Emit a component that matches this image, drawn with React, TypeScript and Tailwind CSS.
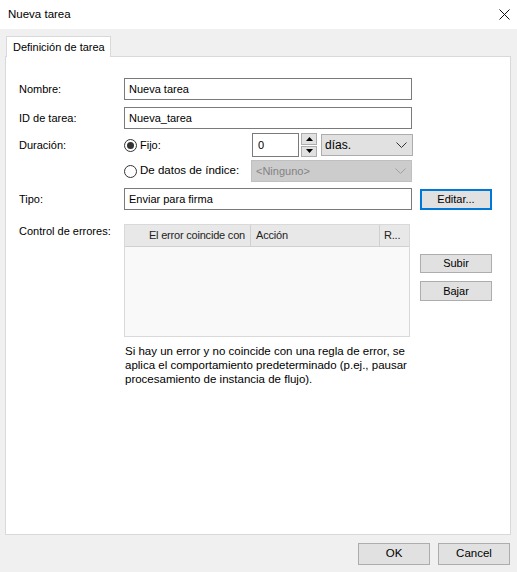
import type { JSX } from "react";

const font = "font-['Liberation_Sans','DejaVu_Sans',sans-serif]";

function Chevron({ color = "#333" }: { color?: string }): JSX.Element {
  return (
    <svg width="11" height="7" viewBox="0 0 11 7" fill="none">
      <path d="M0.5 0.5 L5.5 5.5 L10.5 0.5" stroke={color} strokeWidth="1" />
    </svg>
  );
}

function Radio({ checked }: { checked?: boolean }): JSX.Element {
  return (
    <span className="w-[13px] h-[13px] rounded-full border border-[#333] bg-white flex items-center justify-center shrink-0">
      {checked && <span className="w-[7px] h-[7px] rounded-full bg-[#333]" />}
    </span>
  );
}

function TextBox({ value, className = "" }: { value: string; className?: string }): JSX.Element {
  return (
    <div
      className={`h-[22px] border border-[#7a7a7a] bg-white flex items-center pl-[4px] text-black ${className}`}
    >
      {value}
    </div>
  );
}

function Button({
  children,
  className = "",
}: {
  children: string;
  className?: string;
}): JSX.Element {
  return (
    <div
      className={`border border-[#adadad] bg-[#e1e1e1] flex items-center justify-center text-black ${className}`}
    >
      {children}
    </div>
  );
}

export default function App(): JSX.Element {
  return (
    <div className={`w-[517px] h-[572px] bg-[#f0f0f0] flex flex-col ${font} text-[11px] text-black`}>
      {/* Title bar */}
      <div className="h-[29px] bg-white flex items-center justify-between pl-[8px] pr-[6px]">
        <span className="text-[11.5px]">Nueva tarea</span>
        <svg width="11" height="11" viewBox="0 0 11 11" className="mr-[1px]">
          <path d="M0.5 0.5 L10.5 10.5 M10.5 0.5 L0.5 10.5" stroke="#111" strokeWidth="1" />
        </svg>
      </div>

      <div className="pl-[5px] pt-[7px]">
        {/* Tab header */}
        <div className="ml-[1px] w-[105px] h-[21px] bg-white border border-b-0 border-[#d9d9d9] flex items-center pl-[6px] whitespace-nowrap relative z-10 -mb-[1px]">
          Definición de tarea
        </div>

        {/* Tab page */}
        <div className="w-[506px] h-[479px] bg-white border border-[#d9d9d9] pl-[13px] pt-[21px]">
          <div className="flex flex-col">
            {/* Nombre */}
            <div className="flex items-center h-[22px]">
              <span className="w-[105px]">Nombre:</span>
              <TextBox value="Nueva tarea" className="w-[288px]" />
            </div>

            {/* ID de tarea */}
            <div className="flex items-center h-[22px] mt-[7px]">
              <span className="w-[105px]">ID de tarea:</span>
              <TextBox value="Nueva_tarea" className="w-[288px]" />
            </div>

            {/* Duración - fijo */}
            <div className="flex items-center h-[24px] mt-[4px]">
              <span className="w-[105px]">Duración:</span>
              <div className="w-[128px] flex items-center gap-[3px]">
                <Radio checked />
                <span>Fijo:</span>
              </div>
              <div className="w-[47px] h-[24px] border border-[#7a7a7a] bg-white flex items-center pl-[5px]">
                0
              </div>
              <div className="ml-[2px] w-[16px] h-[24px] flex flex-col gap-[1px]">
                <div className="flex-1 bg-[#e1e1e1] border border-[#adadad] flex items-center justify-center">
                  <svg width="7" height="4" viewBox="0 0 7 4">
                    <path d="M3.5 0 L7 4 L0 4 Z" fill="#000" />
                  </svg>
                </div>
                <div className="flex-1 bg-[#e1e1e1] border border-[#adadad] flex items-center justify-center">
                  <svg width="7" height="4" viewBox="0 0 7 4">
                    <path d="M0 0 L7 0 L3.5 4 Z" fill="#000" />
                  </svg>
                </div>
              </div>
              <div className="ml-[4px] w-[92px] h-[22px] bg-[#e1e1e1] border border-[#adadad] flex items-center justify-between pl-[3px] pr-[5px] text-[12px]">
                <span>días.</span>
                <Chevron />
              </div>
            </div>

            {/* Duración - de datos de índice */}
            <div className="flex items-center h-[22px] mt-[3px]">
              <span className="w-[105px]" />
              <div className="w-[127px] flex items-center gap-[3px] text-[11.5px]">
                <Radio />
                <span>De datos de índice:</span>
              </div>
              <div className="w-[161px] h-[22px] bg-[#cccccc] border border-[#bfbfbf] flex items-center justify-between pl-[4px] pr-[5px] text-[#838383]">
                <span>&lt;Ninguno&gt;</span>
                <Chevron color="#a0a0a0" />
              </div>
            </div>

            {/* Tipo */}
            <div className="flex items-center h-[22px] mt-[6px]">
              <span className="w-[105px]">Tipo:</span>
              <TextBox value="Enviar para firma" className="w-[288px]" />
              <div className="ml-[8px] w-[72px] h-[21px] bg-[#e1e1e1] border-2 border-[#0078d7] flex items-center justify-center">
                Editar...
              </div>
            </div>

            {/* Control de errores */}
            <div className="flex mt-[14px]">
              <span className="w-[105px] -mt-[1px]">Control de errores:</span>
              <div className="w-[286px] h-[113px] border border-[#d9d9d9] bg-[#f9f9f9] flex flex-col">
                <div className="h-[22px] bg-[#e8e8e8] border-b border-[#d0d0d0] flex items-stretch text-[#222] text-[11px] tracking-[-0.2px]">
                  <div className="w-[126px] border-r border-[#d0d0d0] flex items-center justify-end pr-[5px]">
                    El error coincide con
                  </div>
                  <div className="w-[129px] border-r border-[#d0d0d0] flex items-center pl-[5px]">
                    Acción
                  </div>
                  <div className="flex-1 flex items-center pl-[4px]">R...</div>
                </div>
              </div>
              <div className="ml-[10px] pt-[30px] flex flex-col gap-[8px]">
                <Button className="w-[72px] h-[19px]">Subir</Button>
                <Button className="w-[72px] h-[20px]">Bajar</Button>
              </div>
            </div>

            {/* Nota */}
            <div className="ml-[106px] mt-[7px] leading-[14px] text-[11.5px] whitespace-nowrap">
              Si hay un error y no coincide con una regla de error, se
              <br />
              aplica el comportamiento predeterminado (p.ej., pausar
              <br />
              procesamiento de instancia de flujo).
            </div>
          </div>
        </div>

        {/* Footer buttons */}
        <div className="flex justify-end gap-[8px] pr-[7px] mt-[8px]">
          <Button className="w-[72px] h-[22px] text-[11.5px]">OK</Button>
          <Button className="w-[72px] h-[22px] text-[11.5px]">Cancel</Button>
        </div>
      </div>
    </div>
  );
}
